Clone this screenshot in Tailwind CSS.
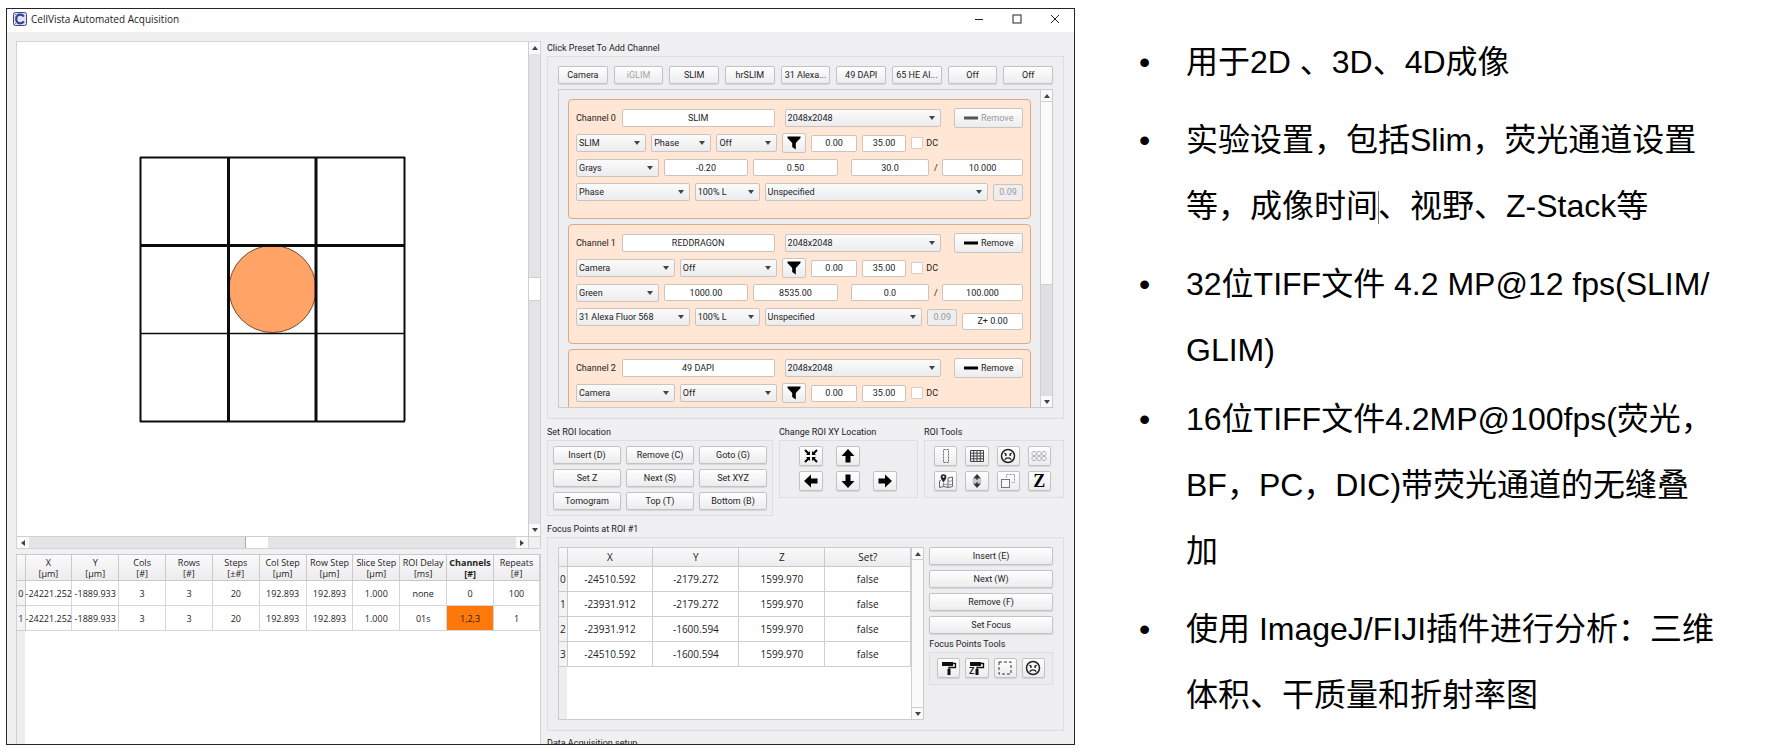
<!DOCTYPE html>
<html lang="zh-CN">

<head>
  <meta charset="UTF-8" />
  <meta name="viewport" content="width=device-width, initial-scale=1.0" />
  <title>CellVista Automated Acquisition</title>
  <script src="https://cdn.jsdelivr.net/npm/@tailwindcss/browser@4"></script>
</head>

<body class="bg-white text-black">
  <main class="flex h-screen overflow-hidden py-2 pl-[6px]">

    <!-- application window -->
    <section class="flex w-[1069px] shrink-[2] flex-col overflow-hidden border border-[#25252a] bg-[#f0eff2] font-['Roboto','Liberation_Sans',sans-serif] text-[9px] leading-3 text-[#222]">
      <header class="flex h-[23px] shrink-0 items-center bg-white pb-1 pl-[6px] pr-[14px]">
        <svg class="h-[14px] w-[14px]" viewBox="0 0 14 14">
          <rect x=".5" y=".5" width="13" height="13" rx="2" fill="#dfe2f4" stroke="#3d4790" />
          <path d="M10.8 4.6C10 3.2 8.800 2.700 7.300 2.700 4.800 2.700 3.200 4.500 3.200 7s1.600 4.300 4.100 4.300c1.500 0 2.700-.5 3.500-1.900" fill="none" stroke="#36408c" stroke-width="2.200" />
          <path d="M1 1l3 3M1 13l3-3" stroke="#6b75b8" />
        </svg>
        <h1 class="ml-1 flex-1 font-['Open_Sans','Noto_Sans',sans-serif] text-[10px]">CellVista Automated Acquisition</h1>
        <div class="flex gap-[28px]">
          <button aria-label="Minimize"><svg class="h-[10px] w-[10px]" viewBox="0 0 10 10"><path d="M1 5.500h8" stroke="#222" /></svg></button>
          <button aria-label="Maximize"><svg class="h-[10px] w-[10px]" viewBox="0 0 10 10"><rect x="1" y="1" width="8" height="8" fill="none" stroke="#222" /></svg></button>
          <button aria-label="Close"><svg class="h-[10px] w-[10px]" viewBox="0 0 10 10"><path d="M1 1l8 8M9 1L1 9" stroke="#222" /></svg></button>
        </div>
      </header>

      <div class="flex min-h-0 flex-1 gap-[6px] pl-[9px] pr-[10px]">

        <!-- left: stage map and ROI table -->
        <div class="flex min-w-0 flex-[525] flex-col gap-[5px] pt-[9px]">
          <div class="grid h-[508px] shrink-0 grid-cols-[1fr_12px] grid-rows-[1fr_12px] border border-[#d3d3d6] bg-white">
            <svg class="h-full w-full min-h-0" viewBox="0 0 511 494">
              <circle cx="255.500" cy="247" r="43.500" fill="#ffa366" stroke="#7a4a2a" />
              <g fill="none" stroke="#0c0c0c">
                <path d="M123 115.500h265M387.500 115v264M388 379.500H123M123.500 380V115" stroke-width="2" />
                <path d="M211.500 115v264M299 115v264M123 203.500h265" stroke-width="3" />
                <path d="M123 291.500h265" stroke-width="1.500" />
              </g>
            </svg>
            <div class="flex min-h-0 flex-col items-center border-l border-[#cfcfd2] bg-[#e4e4e6]">
              <div class="flex h-3 w-full items-center justify-center bg-[#fafafa]"><svg class="h-[4px] w-[6px]" viewBox="0 0 6 4"><path d="M0 4h6L3 0z" fill="#444" /></svg></div>
              <div class="flex-[224]"></div>
              <div class="w-full flex-[22] border-y border-[#cfcfd2] bg-white"></div>
              <div class="flex-[224]"></div>
              <div class="flex h-3 w-full items-center justify-center bg-[#fafafa]"><svg class="h-[4px] w-[6px]" viewBox="0 0 6 4"><path d="M0 0h6L3 4z" fill="#444" /></svg></div>
            </div>
            <div class="flex min-w-0 border-t border-[#cfcfd2] bg-[#e4e4e6]">
              <div class="flex w-3 items-center justify-center bg-[#fafafa]"><svg class="h-[6px] w-[4px]" viewBox="0 0 4 6"><path d="M4 0v6L0 3z" fill="#444" /></svg></div>
              <div class="flex-[218]"></div>
              <div class="flex-[22] border-l border-[#aaa] bg-white"></div>
              <div class="flex-[250]"></div>
              <div class="flex w-3 items-center justify-center bg-[#fafafa]"><svg class="h-[6px] w-[4px]" viewBox="0 0 4 6"><path d="M0 0v6l4-3z" fill="#444" /></svg></div>
            </div>
            <div class="border-l border-t border-[#cfcfd2] bg-[#f0eff2]"></div>
          </div>

          <div class="min-h-0 flex-1 border-x border-[#d0d0d3] bg-[linear-gradient(to_right,#eeedf0_8px,white_8px)]">
            <table id="roiTable" class="w-full table-fixed border-collapse text-center font-['Open_Sans','Noto_Sans',sans-serif] text-[9px] leading-[11px]"></table>
          </div>
        </div>

        <!-- right: channels, ROI controls, focus points -->
        <div class="min-w-0 flex-[517] pt-[10px]">
          <h2>Click Preset To Add Channel</h2>
          <div class="mt-[2px] border border-[#dedee1] bg-[#eeedf0] px-[10px] pb-[10px] pt-[9px]">
            <div id="presets" class="flex gap-[6px]"></div>
            <div class="mt-[5px] flex h-[319px] border border-[#cbcbce]">
              <div id="channels" class="flex min-w-0 flex-1 flex-col gap-[5px] overflow-hidden pl-[9px] pr-[9px] pt-[9px]"></div>
              <div class="flex w-3 flex-col items-center border-l border-[#cfcfd2] bg-[#e0e0e2]">
                <div class="flex h-[11px] w-full items-center justify-center bg-[#fafafa]"><svg class="h-[4px] w-[6px]" viewBox="0 0 6 4"><path d="M0 4h6L3 0z" fill="#444" /></svg></div>
                <div class="w-full flex-[183] border-y border-[#cfcfd2] bg-[#fbfbfb]"></div>
                <div class="flex-[112]"></div>
                <div class="flex h-[11px] w-full items-center justify-center bg-[#fafafa]"><svg class="h-[4px] w-[6px]" viewBox="0 0 6 4"><path d="M0 0h6L3 4z" fill="#444" /></svg></div>
              </div>
            </div>
          </div>

          <div class="mt-[7px] flex items-start gap-[6px]">
            <div class="min-w-0 flex-[226]">
              <h2>Set ROI location</h2>
              <div id="roiButtons" class="mt-[2px] grid grid-cols-3 gap-x-[5px] gap-y-[5px] border border-[#dedee1] bg-[#eeedf0] px-[5px] pb-[5px] pt-[5px]"></div>
            </div>
            <div class="min-w-0 flex-[139]">
              <h2 class="whitespace-nowrap">Change ROI XY Location</h2>
              <div id="moveButtons" class="mt-[2px] grid grid-cols-3 gap-x-[13px] gap-y-[5px] border border-[#dedee1] bg-[#eeedf0] pb-[6px] pl-[19px] pr-[20px] pt-[5px]"></div>
            </div>
            <div class="min-w-0 flex-[140]">
              <h2>ROI Tools</h2>
              <div id="roiTools" class="mt-[2px] grid grid-cols-4 gap-x-[8px] gap-y-[5px] border border-[#dedee1] bg-[#eeedf0] pb-[6px] pl-[9px] pr-[12px] pt-[5px]"></div>
            </div>
          </div>

          <h2 class="mt-[7px]">Focus Points at ROI #1</h2>
          <div class="mt-[2px] flex h-[194px] gap-[5px] border border-[#dedee1] bg-[#eeedf0] px-[10px] pb-[10px] pt-[9px]">
            <div class="flex min-w-0 flex-[365] border border-[#cbcbce] bg-[linear-gradient(to_right,#eeedf0_8px,white_8px)]">
              <div class="min-w-0 flex-1">
                <table id="focusTable" class="w-full table-fixed border-collapse text-center font-['Open_Sans','Noto_Sans',sans-serif] text-[10px]"></table>
              </div>
              <div class="flex w-3 flex-col justify-between border-l border-[#cfcfd2] bg-[#fbfbfb]">
                <div class="flex h-3 items-center justify-center border-b border-[#cfcfd2]"><svg class="h-[4px] w-[6px]" viewBox="0 0 6 4"><path d="M0 4h6L3 0z" fill="#444" /></svg></div>
                <div class="flex h-3 items-center justify-center border-t border-[#cfcfd2]"><svg class="h-[4px] w-[6px]" viewBox="0 0 6 4"><path d="M0 0h6L3 4z" fill="#444" /></svg></div>
              </div>
            </div>
            <div class="min-w-0 flex-[124]">
              <div id="focusButtons" class="grid gap-[5px]"></div>
              <h2 class="mt-[4px]">Focus Points Tools</h2>
              <div id="focusTools" class="mt-[2px] grid grid-cols-4 gap-[5px] border border-[#dedee1] bg-[#ecebee] px-[7px] pb-[6px] pt-[5px]"></div>
            </div>
          </div>
          <h2 class="mt-[6px]">Data Acquisition setup</h2>
        </div>
      </div>
    </section>

    <!-- slide notes -->
    <section class="min-w-0 flex-1 pl-[64px] pr-[50px] pt-[21px] font-['Liberation_Sans','Noto_Sans_CJK_SC',sans-serif] text-[32px] leading-[66px]">
      <ul class="space-y-3">
        <li class="flex"><span class="w-[47px] shrink-0">•</span><p>用于2D 、3D、4D成像</p></li>
        <li class="flex"><span class="w-[47px] shrink-0">•</span><p>实验设置，包括Slim，荧光通道设置等，成像时间<span class="relative"><i class="absolute bottom-0 left-0 h-[33px] w-px bg-[#777]"></i></span>、视野、Z-Stack等</p></li>
        <li class="mb-[3px] flex"><span class="w-[47px] shrink-0">•</span><p>32位TIFF文件 4.2 MP@12 fps(SLIM/<wbr>GLIM)</p></li>
        <li class="flex"><span class="w-[47px] shrink-0">•</span><p>16位TIFF文件4.2MP@100fps(荧光，BF，PC，DIC)带荧光通道的无缝叠加</p></li>
        <li class="flex"><span class="w-[47px] shrink-0">•</span><p>使用 ImageJ/FIJI插件进行分析：三维体积、干质量和折射率图</p></li>
      </ul>
    </section>
  </main>

  <script>
    const $ = (id) => document.getElementById(id);

    const icons = {
      center: '<path d="M2 2l4 4M14 2l-4 4M2 14l4-4M14 14l-4-4" stroke="#000" stroke-width="2"/><path d="M7 3v4H3zM9 3v4h4zM7 13V9H3zM9 13V9h4z" fill="#000"/>',
      up: '<path d="M8 1l6.500 7H10.500v6.500h-5V8H1.500z" fill="#000"/>',
      down: '<path d="M8 15l6.500-7H10.500V1.500h-5V8H1.500z" fill="#000"/>',
      left: '<path d="M1 8l7-6.500V5.500h6.500v5H8v4z" fill="#000"/>',
      right: '<path d="M15 8L8 1.500V5.500H1.500v5H8v4z" fill="#000"/>',
      column: '<rect x="5.500" y="1.500" width="5" height="13" fill="none" stroke="#666" stroke-dasharray="2 1"/>',
      grid: '<path d="M1.500 2.500h13v11h-13zM1.500 5.200h13M1.500 8h13M1.500 10.800h13M4.700 2.500v11M8 2.500v11M11.300 2.500v11" fill="none" stroke="#444"/>',
      sad: '<circle cx="8" cy="8" r="6.500" fill="none" stroke="#222" stroke-width="1.500"/><path d="M4.800 11.800c1.200-2.600 5.200-2.600 6.400 0M4.200 5.200l2.300.8M11.800 5.200l-2.300.8" fill="none" stroke="#222" stroke-width="1.200"/><circle cx="5.800" cy="7" r="1" fill="#222"/><circle cx="10.200" cy="7" r="1" fill="#222"/>',
      wells: '<g fill="none" stroke="#b5b5b8"><circle cx="3" cy="5.500" r="2.200"/><circle cx="8" cy="5.500" r="2.200"/><circle cx="13" cy="5.500" r="2.200"/><circle cx="3" cy="10.500" r="2.200"/><circle cx="8" cy="10.500" r="2.200"/><circle cx="13" cy="10.500" r="2.200"/></g>',
      map: '<path d="M3 7.500L1.500 8v6.500l4.200-1 4.300 1 4.500-1V4L10 5v9.500M5.700 10v3.500" fill="none" stroke="#666"/><path d="M6.500 11.500h8M10 8h4.500" stroke="#999"/><path d="M5.500 9.500C3.500 6.500 2.700 5.500 2.700 4a2.800 2.800 0 0 1 5.600 0c0 1.500-.8 2.500-2.800 5.500z" fill="#222"/><circle cx="5.500" cy="3.800" r="1" fill="#fff"/>',
      split: '<path d="M8 1l4 4.500H8.700v1.500H7.300V5.500H4zM8 15l4-4.500H8.700V9H7.300v1.500H4z" fill="#333"/><path d="M3.500 7h9M3.500 9h9" stroke="#888" stroke-width=".8"/>',
      copy: '<rect x="1.500" y="6.500" width="8" height="8" fill="#f8f8f8" stroke="#777"/><path d="M6.500 4.500v-3h8v8h-3" fill="none" stroke="#999" stroke-dasharray="2 1"/>',
      roller: '<path d="M1 2h11v4H1z" fill="#111"/><path d="M12 3.500h2.500v4H8V10" fill="none" stroke="#111" stroke-width="1.300"/><path d="M6.500 9h3v6h-3z" fill="#111"/>',
      select: '<rect x="2" y="2" width="12" height="12" fill="none" stroke="#333" stroke-dasharray="3 2"/>',
    };

    const svg = (name) => `<svg class="h-4 w-4" viewBox="0 0 16 16">${icons[name]}</svg>`;

    const button = (text, disabled) =>
      `<button ${disabled ? 'disabled' : ''} class="h-[18px] min-w-0 flex-1 truncate rounded-[2px] border border-[#c3c3c6] bg-linear-to-b from-white to-[#ececee] px-[2px] shadow-[0_1px_1px_#0000001a] disabled:text-[#a5a5a8]">${text}</button>`;

    const iconButton = (label, content) =>
      `<button aria-label="${label}" class="flex h-5 min-w-0 items-center justify-center rounded-[2px] border border-[#c3c3c6] bg-linear-to-b from-white to-[#ececee] shadow-[0_1px_1px_#0000001a]">${content}</button>`;

    const field = (size, label, value, disabled) =>
      `<input aria-label="${label}" value="${value}" ${disabled ? 'disabled' : ''} class="h-[17px] w-0 min-w-0 ${size} rounded-[2px] border border-[#cdc3bd] bg-white text-center disabled:bg-[#eeedf0] disabled:text-[#999]" />`;

    const dropdown = (size, label, value) =>
      `<span class="relative flex min-w-0 ${size}">
        <select aria-label="${label}" class="h-[18px] w-full appearance-none rounded-[2px] border border-[#cdc3bd] bg-linear-to-b from-[#fbfbfb] to-[#ececee] pl-[2px]"><option>${value}</option></select>
        <svg class="pointer-events-none absolute right-[6px] top-[7px] h-[4px] w-[6px]" viewBox="0 0 6 4"><path d="M0 0h6L3 4z" fill="#444"/></svg>
      </span>`;

    // presets
    $('presets').innerHTML = ['Camera', 'iGLIM', 'SLIM', 'hrSLIM', '31 Alexa...', '49 DAPI', '65 HE Al...', 'Off', 'Off']
      .map(t => button(t, t === 'iGLIM')).join('');

    // channel cards
    const channels = [
      { name: 'SLIM', modes: ['SLIM', 'Phase', 'Off'], color: 'Grays', min: '-0.20', max: '0.50', exposure: '30.0', gain: '10.000', filter: 'Phase', locked: true },
      { name: 'REDDRAGON', modes: ['Camera', 'Off'], color: 'Green', min: '1000.00', max: '8535.00', exposure: '0.0', gain: '100.000', filter: '31 Alexa Fluor 568', z: 'Z+ 0.00' },
      { name: '49 DAPI', modes: ['Camera', 'Off'], color: 'Blue', min: '1000.00', max: '8535.00', exposure: '0.0', gain: '100.000', filter: '49 DAPI', z: 'Z+ 0.00' },
    ];
    const modeSizes = { 3: ['flex-[71]', 'flex-[61]', 'flex-[61]'], 2: ['flex-[100]', 'flex-[98]'] };

    $('channels').innerHTML = channels.map((c, i) => `
      <div class="flex h-[120px] shrink-0 flex-col gap-[7px] rounded-[4px] border border-[#dfa983] bg-[#ffe6d5] px-[7px] pt-[9px]">
        <div class="flex h-[18px] items-center gap-[5px]">
          <label for="name${i}" class="flex-[41] whitespace-nowrap">Channel ${i}</label>
          <input id="name${i}" value="${c.name}" class="h-[18px] w-0 min-w-0 flex-[152] rounded-[2px] border border-[#cdc3bd] bg-white text-center" />
          <span class="ml-[5px] flex min-w-0 flex-[158]">${dropdown('flex-1', 'Resolution', '2048x2048')}</span>
          <button ${c.locked ? 'disabled' : ''} class="ml-[8px] flex h-5 min-w-0 flex-[67] items-center justify-center gap-[3px] rounded-[2px] border border-[#cdc3bd] bg-linear-to-b from-white to-[#ececee] disabled:text-[#999]">
            <svg class="h-[4px] w-[14px]" viewBox="0 0 14 4"><path d="M0 .5h14v3H0z" fill="${c.locked ? '#555' : '#000'}"/></svg>Remove
          </button>
        </div>
        <div class="flex h-[18px] items-center gap-[5px]">
          ${c.modes.map((m, j) => dropdown(modeSizes[c.modes.length][j], 'Mode', m)).join('')}
          <button aria-label="Filter" class="flex h-5 min-w-0 flex-[23] items-center justify-center rounded-[2px] border border-[#cdc3bd] bg-linear-to-b from-white to-[#ececee]">
            <svg class="h-[14px] w-[14px]" viewBox="0 0 14 14"><path d="M.5.5h13v1.500L8.800 7v6.500L5.200 11V7L.5 2z" fill="#000"/></svg>
          </button>
          ${field('flex-[44]', 'Start', '0.00')}
          ${field('flex-[43]', 'Delay', '35.00')}
          <label class="flex flex-[113] items-center gap-[3px]"><input type="checkbox" class="h-3 w-3 appearance-none rounded-[1px] border border-[#d8ccc5] bg-white checked:bg-[#444]" />DC</label>
        </div>
        <div class="flex h-[17px] items-center gap-[5px]">
          ${dropdown('flex-[84]', 'Colour', c.color)}
          ${field('flex-[83]', 'Minimum', c.min)}
          ${field('flex-[84]', 'Maximum', c.max)}
          <span class="ml-[8px] flex min-w-0 flex-[79]">${field('flex-1', 'Exposure', c.exposure)}</span>
          <span class="w-[3px]">/</span>
          ${field('flex-[80]', 'Gain', c.gain)}
        </div>
        <div class="flex h-[18px] items-center gap-[5px]">
          ${dropdown('flex-[114]', 'Filter cube', c.filter)}
          ${dropdown('flex-[65]', 'Light', '100% L')}
          ${dropdown(c.z ? 'flex-[158]' : 'flex-[224]', 'Objective', 'Unspecified')}
          ${field('flex-[28]', 'NA', '0.09', true)}
          ${c.z ? `<span class="flex min-w-0 flex-[61] pt-2">${field('flex-1', 'Z offset', c.z)}</span>` : ''}
        </div>
      </div>`).join('');

    // ROI controls
    $('roiButtons').innerHTML = ['Insert (D)', 'Remove (C)', 'Goto (G)', 'Set Z', 'Next (S)', 'Set XYZ', 'Tomogram', 'Top (T)', 'Bottom (B)']
      .map(t => button(t)).join('');
    $('moveButtons').innerHTML = ['center', 'up', '', 'left', 'down', 'right']
      .map(n => n ? iconButton(n, svg(n)) : '<span></span>').join('');
    $('roiTools').innerHTML = ['column', 'grid', 'sad', 'wells', 'map', 'split', 'copy'].map(n => iconButton(n, svg(n))).join('')
      + iconButton('Z stack', `<b class="font-['Liberation_Serif',serif] text-[18px] leading-4 text-black">Z</b>`);
    $('focusButtons').innerHTML = ['Insert (E)', 'Next (W)', 'Remove (F)', 'Set Focus'].map(t => button(t)).join('');
    $('focusTools').innerHTML = iconButton('roller', svg('roller'))
      + iconButton('roller Z', `<span class="relative flex">${svg('roller')}<b class="absolute bottom-0 left-0 text-[9px] leading-[9px]">Z</b></span>`)
      + iconButton('select', svg('select')) + iconButton('sad', svg('sad'));

    // ROI table
    const roiHeads = [['X', '[µm]'], ['Y', '[µm]'], ['Cols', '[#]'], ['Rows', '[#]'], ['Steps', '[±#]'], ['Col Step', '[µm]'], ['Row Step', '[µm]'], ['Slice Step', '[µm]'], ['ROI Delay', '[ms]'], ['Channels', '[#]'], ['Repeats', '[#]']];
    const roiRows = [
      ['-24221.252', '-1889.933', '3', '3', '20', '192.893', '192.893', '1.000', 'none', '0', '100'],
      ['-24221.252', '-1889.933', '3', '3', '20', '192.893', '192.893', '1.000', '01s', '1,2,3', '1'],
    ];
    $('roiTable').innerHTML = `<thead><tr class="h-[26px] bg-linear-to-b from-[#fafafa] to-[#ecebee]"><th class="w-2 border-y border-[#c9c9cc]"></th>${roiHeads.map(([a, b]) =>
      `<th class="whitespace-nowrap border border-[#c9c9cc] p-0 last:w-[46px] ${a === 'Channels' ? 'font-bold' : 'font-normal'}">${a}<br>${b}</th>`).join('')}</tr></thead>
      <tbody>${roiRows.map((r, i) => `<tr class="h-[25px]"><th class="border border-l-0 border-[#c9c9cc] bg-[#f3f2f5] p-0 font-normal">${i}</th>${r.map(v =>
      `<td class="border border-[#d6d6d9] p-0 ${v === '1,2,3' ? 'bg-[#ff780a]' : 'bg-white'}">${v}</td>`).join('')}</tr>`).join('')}</tbody>`;

    // focus points table
    const focusRows = [
      ['-24510.592', '-2179.272', '1599.970', 'false'],
      ['-23931.912', '-2179.272', '1599.970', 'false'],
      ['-23931.912', '-1600.594', '1599.970', 'false'],
      ['-24510.592', '-1600.594', '1599.970', 'false'],
    ];
    $('focusTable').innerHTML = `<thead><tr class="h-[18px] bg-linear-to-b from-[#fafafa] to-[#ecebee]"><th class="w-2 border-b border-[#c9c9cc]"></th>${['X', 'Y', 'Z', 'Set?'].map(h =>
      `<th class="border-x border-b border-[#c9c9cc] p-0 font-normal first-of-type:border-l-0">${h}</th>`).join('')}</tr></thead>
      <tbody>${focusRows.map((r, i) => `<tr class="h-[25px]"><th class="border border-l-0 border-[#c9c9cc] bg-[#f3f2f5] p-0 font-normal">${i}</th>${r.map(v =>
      `<td class="border border-[#cfcfd2] bg-white p-0">${v}</td>`).join('')}</tr>`).join('')}</tbody>`;
  </script>
</body>

</html>
